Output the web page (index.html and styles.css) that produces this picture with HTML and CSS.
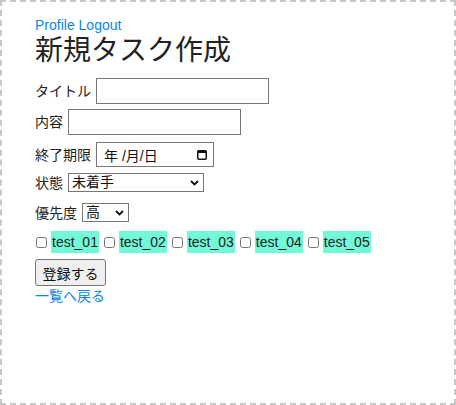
FILE: index.html
```html
<!DOCTYPE html>
<html lang="ja">
<head>
<meta charset="UTF-8">
<title>新規タスク作成</title>
<link rel="stylesheet" href="styles.css">
</head>
<body>
<div class="page">
  <nav class="nav"><a href="#">Profile</a> <a href="#">Logout</a></nav>
  <h1>新規タスク作成</h1>

  <form class="task-form">
    <div class="field field-title">
      <label for="title">タイトル</label>
      <input type="text" id="title" class="text-input">
    </div>
    <div class="field field-content">
      <label for="content">内容</label>
      <input type="text" id="content" class="text-input">
    </div>
    <div class="field field-date">
      <label for="deadline">終了期限</label>
      <span class="date-wrap">
        <input type="text" id="deadline" class="date-input" value="年 /月/日" readonly>
        <svg class="cal-icon" width="10" height="11" viewBox="0 0 10 11">
          <rect x="0.75" y="1.75" width="8.5" height="8.5" rx="1" fill="none" stroke="#111" stroke-width="1.5"/>
          <rect x="0.5" y="1.5" width="9" height="2.5" fill="#111"/>
        </svg>
      </span>
    </div>
    <div class="field field-status">
      <label for="status">状態</label>
      <span class="select-wrap">
        <select id="status" class="select select-status">
          <option>未着手</option>
          <option>着手中</option>
          <option>完了</option>
        </select>
        <svg class="chevron" width="9" height="6" viewBox="0 0 9 6"><path d="M1 1l3.5 3.5L8 1" fill="none" stroke="#111" stroke-width="1.8"/></svg>
      </span>
    </div>
    <div class="field field-priority">
      <label for="priority">優先度</label>
      <span class="select-wrap">
        <select id="priority" class="select select-priority">
          <option>高</option>
          <option>中</option>
          <option>低</option>
        </select>
        <svg class="chevron" width="9" height="6" viewBox="0 0 9 6"><path d="M1 1l3.5 3.5L8 1" fill="none" stroke="#111" stroke-width="1.8"/></svg>
      </span>
    </div>
    <div class="field labels">
      <span class="label-item"><input type="checkbox" id="l1"><label for="l1" class="tag">test_01</label></span>
      <span class="label-item"><input type="checkbox" id="l2"><label for="l2" class="tag">test_02</label></span>
      <span class="label-item"><input type="checkbox" id="l3"><label for="l3" class="tag">test_03</label></span>
      <span class="label-item"><input type="checkbox" id="l4"><label for="l4" class="tag">test_04</label></span>
      <span class="label-item"><input type="checkbox" id="l5"><label for="l5" class="tag">test_05</label></span>
    </div>
    <div class="field field-submit">
      <button type="submit" class="submit">登録する</button>
    </div>
  </form>
  <a href="#" class="back">一覧へ戻る</a>
</div>
</body>
</html>
```

FILE: styles.css
```css
body {
  margin: 0;
  font-family: "Liberation Sans", "Noto Sans CJK JP", sans-serif;
  font-size: 14px;
  color: #222;
}
.page {
  box-sizing: border-box;
  height: 405px;
  border: 2px dashed #c8c8c8;
  padding: 15px 33px 0;
}
a {
  color: #0c87e6;
  text-decoration: none;
}
.nav {
  line-height: 16px;
}
h1 {
  margin: 2px 0 0;
  font-size: 28px;
  font-weight: normal;
  line-height: 32px;
  color: #222;
}
.field {
  display: flex;
  align-items: center;
  gap: 5px;
  margin-top: 6px;
  line-height: 16px;
}
.field label {
  white-space: nowrap;
}
.field-title { margin-top: 11px; }
.field-content { margin-top: 5px; }
.field-date { margin-top: 7px; }
.field-status { margin-top: 6px; }
.field-priority { margin-top: 11px; }
.labels { margin-top: 9px; gap: 0; }
.field-submit { margin-top: 6px; }

.text-input,
.date-input,
.select {
  box-sizing: border-box;
  margin: 0;
  border: 1px solid #777;
  border-radius: 0;
  background: #fff;
  font-family: inherit;
  font-size: 14px;
  color: #111;
  outline: none;
}
.text-input {
  width: 173px;
  height: 26px;
  padding: 0 4px;
}
.date-wrap,
.select-wrap {
  position: relative;
  display: inline-flex;
}
.date-input {
  width: 118px;
  height: 25px;
  padding: 0 0 0 7px;
}
.cal-icon {
  position: absolute;
  right: 7px;
  top: 7px;
}
.select {
  -webkit-appearance: none;
  appearance: none;
  height: 19px;
  padding: 0 0 0 3px;
  line-height: 17px;
}
.select-status { width: 136px; }
.select-priority { width: 47px; }
.chevron {
  position: absolute;
  right: 5px;
  top: 7px;
  pointer-events: none;
}
.label-item {
  display: inline-flex;
  align-items: center;
  margin-right: 4px;
}
.label-item input {
  width: 11px;
  height: 11px;
  margin: 0 4px 0 1px;
}
.tag {
  display: inline-block;
  background: #72f9d8;
  line-height: 22px;
  padding: 0 1px;
}
.submit {
  box-sizing: border-box;
  width: 71px;
  height: 27px;
  margin: 0;
  padding: 0;
  border: 1px solid #767676;
  border-radius: 3px;
  background: #efefef;
  font-family: inherit;
  font-size: 14px;
  color: #111;
}
.back {
  display: inline-block;
  margin-top: 2px;
  line-height: 16px;
}
```
